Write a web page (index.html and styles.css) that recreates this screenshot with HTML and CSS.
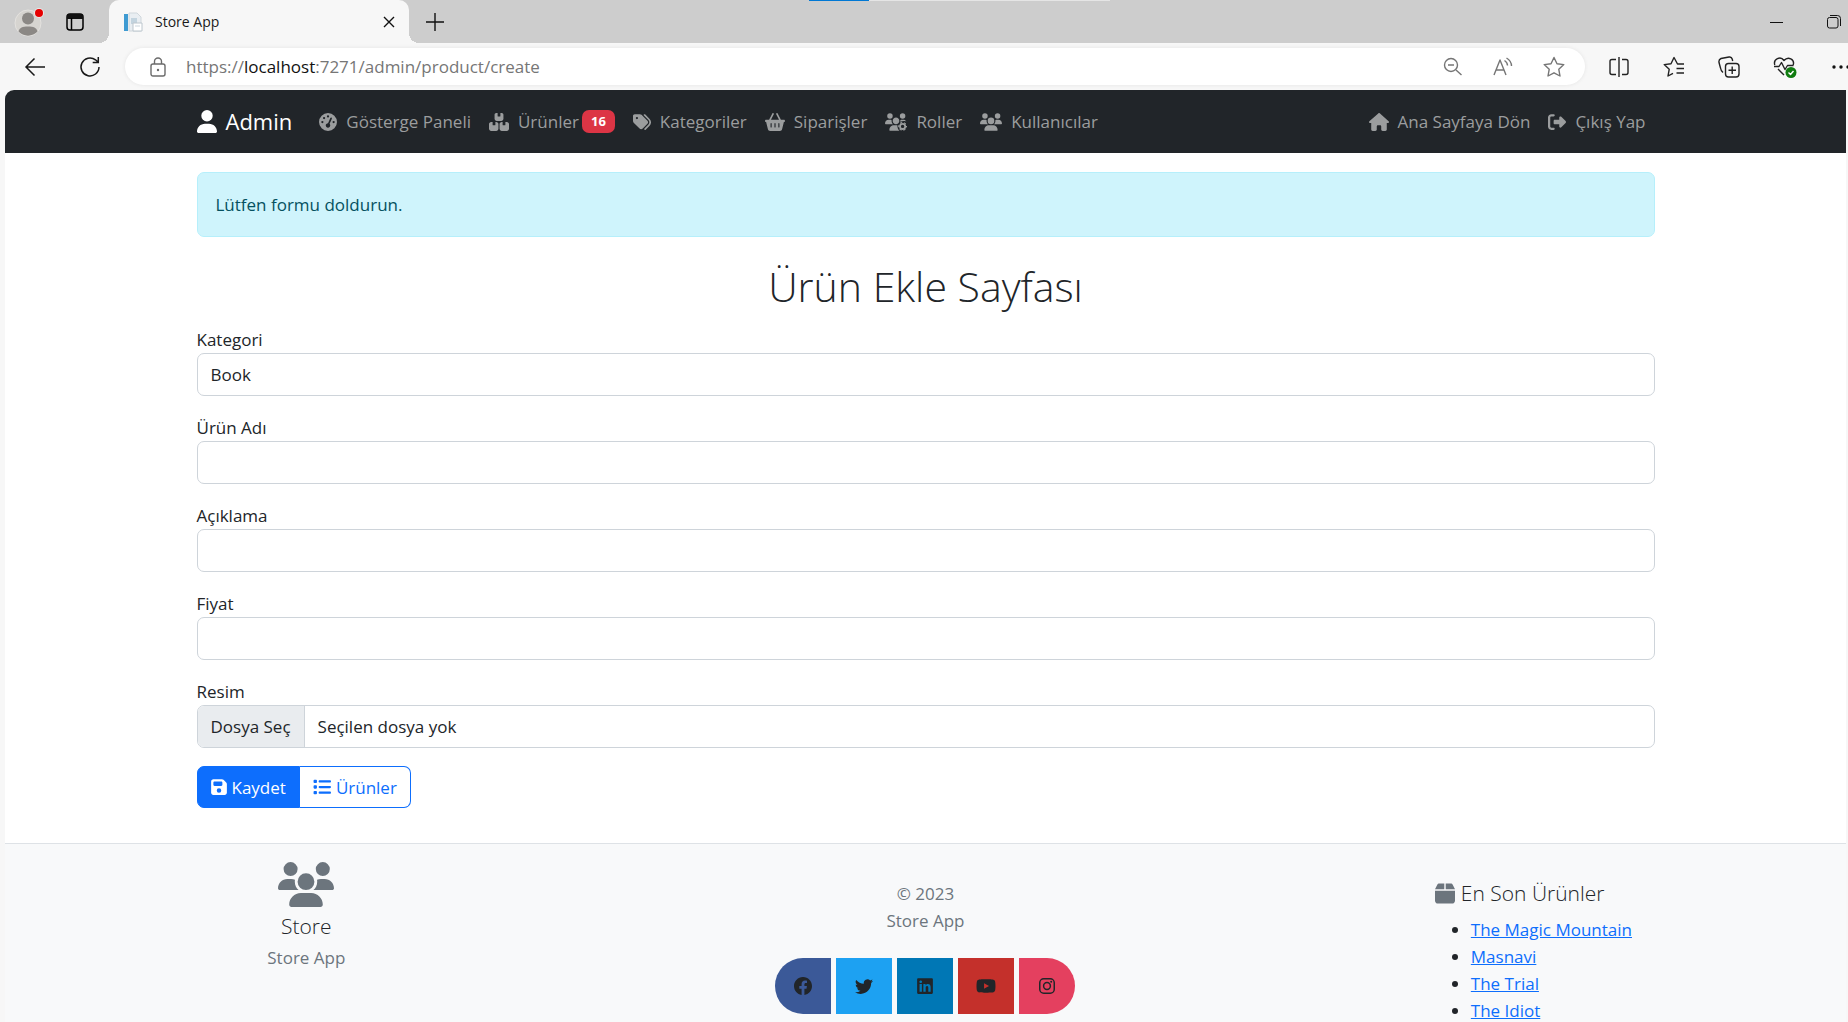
FILE: index.html
```html
<!DOCTYPE html>
<html lang="tr">
<head>
<meta charset="utf-8">
<meta name="viewport" content="width=device-width, initial-scale=1">
<title>Store App</title>
<link rel="stylesheet" href="styles.css">
</head>
<body>
<svg class="sprite" aria-hidden="true">
  <symbol id="users" viewBox="0 0 640 512"><path d="M144 0a80 80 0 1 1 0 160A80 80 0 1 1 144 0zM512 0a80 80 0 1 1 0 160A80 80 0 1 1 512 0zM0 298.7C0 239.8 47.8 192 106.7 192h42.7c15.9 0 31 3.5 44.6 9.7c-1.3 7.2-1.9 14.7-1.9 22.3c0 38.2 16.8 72.5 43.3 96c-.2 0-.4 0-.7 0H21.3C9.6 320 0 310.4 0 298.7zM405.3 320c-.2 0-.4 0-.7 0c26.6-23.5 43.3-57.8 43.3-96c0-7.6-.7-15-1.9-22.3c13.6-6.3 28.7-9.7 44.6-9.7h42.7C592.2 192 640 239.8 640 298.7c0 11.8-9.6 21.3-21.3 21.3H405.3zM224 224a96 96 0 1 1 192 0 96 96 0 1 1 -192 0zM128 485.3C128 411.7 187.7 352 261.3 352H378.7C452.3 352 512 411.7 512 485.3c0 14.7-11.9 26.7-26.7 26.7H154.7c-14.7 0-26.7-11.9-26.7-26.7z"/></symbol>
</svg>
<div class="browser">
  <header class="tabstrip">
    <button class="chrome-btn profile" aria-label="Profil">
      <svg width="32" height="32" viewBox="0 0 32 32"><circle cx="15" cy="17" r="13" fill="#d6d4d0" stroke="#e4e2df"/><circle cx="15" cy="12.500" r="6" fill="#8b8885"/><path d="M5.500 25.500c1-4 4-5 9.500-5s8.500 1 9.500 5a13 13 0 0 1-19 0z" fill="#8b8885"/><circle cx="26" cy="7" r="5" fill="#e8e8e8"/><circle cx="26" cy="7" r="4" fill="#e60000"/></svg>
    </button>
    <button class="chrome-btn workspaces" aria-label="Sekme eylemleri">
      <svg width="20" height="20" viewBox="0 0 20 20"><rect x="2" y="2" width="16" height="16" rx="3" fill="none" stroke="#000" stroke-width="1.500"/><path d="M2 7V4.500Q2 2 4.500 2h11Q18 2 18 4.500V7z"/><path d="M6.500 6v12" stroke="#000" stroke-width="1.500"/></svg>
    </button>
    <div class="tab">
      <svg width="20" height="20" viewBox="0 0 20 20"><path d="M1 2h4v17H1z" fill="#3f9bd2"/><path d="M6 1h8l4 4v14H6z" fill="#e9eef2" stroke="#d0d7dc"/><path d="M8 6h6v6H8z" fill="#c3d4df"/><path d="M10 11h9v8h-9z" fill="#fff" stroke="#bcc6cd"/><path d="M12 14h5" stroke="#ccd6dd"/></svg>
      <span class="tab-title">Store App</span>
      <button class="chrome-btn" aria-label="Sekmeyi kapat"><svg width="12" height="12" viewBox="0 0 12 12"><path d="M1 1l10 10M11 1L1 11" stroke="#111" stroke-width="1.400"/></svg></button>
    </div>
    <button class="chrome-btn new-tab" aria-label="Yeni sekme"><svg width="18" height="18" viewBox="0 0 18 18"><path d="M9 0v18M0 9h18" stroke="#111" stroke-width="1.400"/></svg></button>
    <div class="window-controls">
      <button class="chrome-btn" aria-label="Simge durumuna küçült"><svg width="14" height="14" viewBox="0 0 14 14"><path d="M0 7.500h13" stroke="#111"/></svg></button>
      <button class="chrome-btn" aria-label="Önceki boyut"><svg width="14" height="14" viewBox="0 0 14 14"><rect x=".5" y="2.500" width="10.500" height="10.500" rx="2" fill="none" stroke="#111"/><path d="M3 .5h7.500q3 0 3 3V11" fill="none" stroke="#111"/></svg></button>
    </div>
    <div class="load-line"></div>
  </header>

  <div class="toolbar">
    <button class="chrome-btn" aria-label="Geri"><svg width="22" height="20" viewBox="0 0 22 20"><path d="M21 10H2M10.500 1.500L2 10l8.500 8.500" fill="none" stroke="#1a1a1a" stroke-width="1.500"/></svg></button>
    <button class="chrome-btn reload" aria-label="Yenile"><svg width="22" height="22" viewBox="0 0 22 22"><path d="M20 11a9 9 0 1 1-3.500-7.200L19 6M19.300 1v5.600h-5.600" fill="none" stroke="#1a1a1a" stroke-width="1.500"/></svg></button>
    <div class="address">
      <svg width="16" height="20" viewBox="0 0 16 20"><rect x="1" y="7" width="14" height="12" rx="2" fill="none" stroke="#6b6b6b" stroke-width="1.400"/><path d="M4.500 7V4.500a3.500 3.500 0 0 1 7 0V7" fill="none" stroke="#6b6b6b" stroke-width="1.400"/><circle cx="8" cy="13" r="1.200" fill="#6b6b6b"/></svg>
      <span class="url">https://<b>localhost</b>:7271/admin/product/create</span>
      <div class="address-tools">
        <button class="chrome-btn" aria-label="Uzaklaştır"><svg class="line line-gray" width="20" height="20" viewBox="0 0 20 20"><circle cx="8" cy="8" r="6.500"/><path d="M5 8h6M13 13l5.500 5"/></svg></button>
        <button class="chrome-btn" aria-label="Sesli oku"><svg class="line line-gray" width="20" height="20" viewBox="0 0 20 20"><path d="M1 18L7 3l6 15M3 13h8M11.500 3.500q3 2 3 5M13.500 1q5 3 5 8"/></svg></button>
        <button class="chrome-btn" aria-label="Sık kullanılanlara ekle"><svg class="line line-gray" width="22" height="22" viewBox="0 0 22 22"><path d="M11 1.500l3 6.200 6.800.9-5 4.700 1.200 6.700-6-3.200L5 20l1.200-6.700-5-4.700L8 7.700z"/></svg></button>
      </div>
    </div>
    <div class="extensions">
      <button class="chrome-btn" aria-label="Ekranı böl"><svg class="line" width="22" height="22" viewBox="0 0 22 22"><path d="M8 3.500H4Q2 3.500 2 5.500v11q0 2 2 2h4M14 3.500h4q2 0 2 2v11q0 2-2 2h-4M11 1v20"/></svg></button>
      <button class="chrome-btn" aria-label="Sık kullanılanlar"><svg class="line" width="22" height="22" viewBox="0 0 22 22"><path d="M21 8h-6.500L11 1.500 8 7.700l-6.800.9 5 4.700L5 20l5-2.700M13.500 12.500H21M13.500 17H21"/></svg></button>
      <button class="chrome-btn" aria-label="Koleksiyonlar"><svg class="line" width="22" height="22" viewBox="0 0 22 22"><rect x="7.500" y="7.500" width="13.500" height="13.500" rx="3"/><path d="M14.200 10.500v7.500M10.500 14.200h7.500M5 16.500Q3 15 2.500 12L1 6.500q-.500-3 2-4L11 1q2.500-.5 3.200 2l.5 2"/></svg></button>
      <button class="chrome-btn" aria-label="Tarayıcı temel özellikleri"><svg class="line" width="24" height="22" viewBox="0 0 24 22"><path d="M1.800 9C0 3 7.500-.5 11 4.500 15 0 22 3 20.200 9M1 10.500h5l2.500-4 3.500 7 2.500-4h6M5 13l6 6"/><circle cx="18" cy="16.500" r="5.500" fill="#107c10" stroke="none"/><path d="M15.500 16.500l2 2 3-3.500" stroke="#fff"/></svg></button>
      <button class="chrome-btn" aria-label="Ayarlar ve daha fazlası"><svg width="22" height="22" viewBox="0 0 22 22"><circle cx="4" cy="11" r="1.700"/><circle cx="11" cy="11" r="1.700"/><circle cx="18" cy="11" r="1.700"/></svg></button>
    </div>
  </div>

  <div class="page">
    <nav class="navbar">
      <div class="container nav-inner">
        <a class="brand" href="#"><svg class="icon-brand" viewBox="0 0 448 512"><path d="M224 256A128 128 0 1 0 224 0a128 128 0 1 0 0 256zm-45.700 48C79.800 304 0 383.800 0 482.300C0 498.700 13.300 512 29.700 512H418.300c16.400 0 29.700-13.300 29.700-29.700C448 383.800 368.200 304 269.700 304H178.300z"/></svg>Admin</a>
        <ul class="nav-list">
          <li><a class="nav-link" href="#"><svg class="icon" viewBox="0 0 512 512"><path d="M0 256a256 256 0 1 1 512 0A256 256 0 1 1 0 256zM288 96a32 32 0 1 0 -64 0 32 32 0 1 0 64 0zM256 416c35.300 0 64-28.700 64-64c0-17.400-6.900-33.100-18.100-44.600L366 161.700c5.300-12.100-.2-26.300-12.300-31.600s-26.300 .2-31.600 12.300L257.900 288c-.6 0-1.300 0-1.900 0c-35.300 0-64 28.700-64 64s28.700 64 64 64zM176 144a32 32 0 1 0 -64 0 32 32 0 1 0 64 0zM96 288a32 32 0 1 0 0-64 32 32 0 1 0 0 64zm352-32a32 32 0 1 0 -64 0 32 32 0 1 0 64 0z"/></svg>Gösterge Paneli</a></li>
          <li><a class="nav-link" href="#"><svg class="icon icon-wide" viewBox="0 0 576 512"><path d="M248 0H208c-26.500 0-48 21.500-48 48V160c0 35.300 28.700 64 64 64H352c35.300 0 64-28.700 64-64V48c0-26.500-21.500-48-48-48H328V80c0 8.800-7.200 16-16 16H264c-8.800 0-16-7.200-16-16V0zM64 256c-35.300 0-64 28.700-64 64V448c0 35.300 28.700 64 64 64H208c35.300 0 64-28.700 64-64V320c0-35.300-28.700-64-64-64H184v80c0 8.800-7.200 16-16 16H120c-8.800 0-16-7.200-16-16V256H64zM368 512H512c35.300 0 64-28.700 64-64V320c0-35.300-28.700-64-64-64H472v80c0 8.800-7.200 16-16 16H408c-8.800 0-16-7.200-16-16V256H368c-35.300 0-64 28.700-64 64V448c0 35.300 28.700 64 64 64z"/></svg>Ürünler<span class="badge">16</span></a></li>
          <li><a class="nav-link" href="#"><svg class="icon" viewBox="0 0 512 512"><path d="M345 39.100L472.800 168.400c52.400 53 52.400 138.200 0 191.200L360.800 472.900c-9.300 9.400-24.500 9.500-33.900 .2s-9.500-24.500-.2-33.900L438.600 325.900c33.900-34.300 33.900-89.400 0-123.700L310.900 72.900c-9.300-9.400-9.200-24.600 .2-33.900s24.600-9.200 33.900 .2zM0 229.500V80C0 53.500 21.500 32 48 32H197.500c17 0 33.300 6.700 45.300 18.700l168 168c25 25 25 65.500 0 90.500L277.300 442.700c-25 25-65.500 25-90.500 0l-168-168C6.700 262.700 0 246.500 0 229.500zM144 144a32 32 0 1 0 -64 0 32 32 0 1 0 64 0z"/></svg>Kategoriler</a></li>
          <li><a class="nav-link" href="#"><svg class="icon icon-wide" viewBox="0 0 576 512"><path d="M253.300 35.100c6.100-11.800 1.500-26.300-10.200-32.400s-26.300-1.500-32.400 10.200L117.600 192H32c-17.700 0-32 14.300-32 32s14.300 32 32 32L83.900 463.500C91 492 116.600 512 146 512H430c29.400 0 55-20 62.100-48.500L544 256c17.700 0 32-14.300 32-32s-14.300-32-32-32H458.400L365.300 12.900C359.200 1.200 344.700-3.400 332.900 2.700s-16.300 20.600-10.200 32.400L404.300 192H171.700L253.300 35.100zM192 304v96c0 8.800-7.200 16-16 16s-16-7.200-16-16V304c0-8.800 7.200-16 16-16s16 7.200 16 16zm96-16c8.800 0 16 7.200 16 16v96c0 8.800-7.200 16-16 16s-16-7.200-16-16V304c0-8.800 7.200-16 16-16zm128 16v96c0 8.800-7.200 16-16 16s-16-7.200-16-16V304c0-8.800 7.200-16 16-16s16 7.200 16 16z"/></svg>Siparişler</a></li>
          <li><a class="nav-link" href="#"><svg class="icon icon-group" viewBox="0 0 640 512"><path d="M144 160A80 80 0 1 0 144 0a80 80 0 1 0 0 160zm368 0A80 80 0 1 0 512 0a80 80 0 1 0 0 160zM0 298.700C0 310.400 9.600 320 21.300 320H234.700c.2 0 .4 0 .7 0c-26.600-23.500-43.300-57.800-43.300-96c0-7.600 .7-15 1.900-22.300c-13.600-6.300-28.700-9.700-44.600-9.700H106.700C47.800 192 0 239.800 0 298.700zM320 320c53 0 96-43 96-96s-43-96-96-96s-96 43-96 96s43 96 96 96zm40 32H261.300C187.700 352 128 411.700 128 485.300c0 14.700 11.900 26.700 26.700 26.700H420c-40-35-60-90-60-160zM446 202c20-8 35-10 45-10h42.700C570 192 602 210 621 238c-60-20-120-15-174 12z"/><circle class="ring" cx="512" cy="384" r="76" stroke-width="52"/><circle class="ring" cx="512" cy="384" r="112" stroke-width="32" stroke-dasharray="62 55.286" stroke-dashoffset="31"/></svg>Roller</a></li>
          <li><a class="nav-link" href="#"><svg class="icon icon-group"><use href="#users"/></svg>Kullanıcılar</a></li>
        </ul>
        <ul class="nav-list nav-end">
          <li><a class="nav-link" href="#"><svg class="icon icon-wide" viewBox="0 0 576 512"><path d="M575.800 255.500c0 18-15 32.100-32 32.100h-32l.7 160.200c0 2.700-.2 5.400-.5 8.100V472c0 22.100-17.900 40-40 40H456c-1.100 0-2.200 0-3.300-.1c-1.400 .1-2.800 .1-4.200 .1H416 392c-22.100 0-40-17.900-40-40V448 384c0-17.700-14.300-32-32-32H256c-17.700 0-32 14.300-32 32v64 24c0 22.100-17.900 40-40 40H160 128.100c-1.500 0-3-.1-4.500-.2c-1.200 .1-2.400 .2-3.600 .2H104c-22.100 0-40-17.900-40-40V360c0-.9 0-1.900 .1-2.800V287.600H32c-18 0-32-14-32-32.100c0-9 3-17 10-24L266.400 8c7-7 15-8 22-8s15 2 21 7L564.800 231.500c8 7 12 15 11 24z"/></svg>Ana Sayfaya Dön</a></li>
          <li><a class="nav-link" href="#"><svg class="icon" viewBox="0 0 512 512"><path d="M377.900 105.900L500.700 228.700c7.200 7.200 11.300 17.100 11.300 27.300s-4.100 20.100-11.300 27.300L377.900 406.100c-6.400 6.400-15 9.900-24 9.900c-18.700 0-33.900-15.200-33.900-33.900l0-62.100-128 0c-17.700 0-32-14.300-32-32l0-64c0-17.700 14.300-32 32-32l128 0 0-62.100c0-18.700 15.200-33.900 33.900-33.900c9 0 17.600 3.600 24 9.900zM160 96L96 96c-17.700 0-32 14.300-32 32l0 256c0 17.700 14.300 32 32 32l64 0c17.700 0 32 14.300 32 32s-14.300 32-32 32l-64 0c-53 0-96-43-96-96L0 128C0 75 43 32 96 32l64 0c17.700 0 32 14.300 32 32s-14.300 32-32 32z"/></svg>Çıkış Yap</a></li>
        </ul>
      </div>
    </nav>

    <main class="container content">
      <div class="alert" role="alert">Lütfen formu doldurun.</div>
      <h1 class="title">Ürün Ekle Sayfası</h1>
      <form class="form">
        <div class="field"><label for="kategori">Kategori</label><select id="kategori" class="control"><option>Book</option></select></div>
        <div class="field"><label for="ad">Ürün Adı</label><input id="ad" class="control" type="text"></div>
        <div class="field"><label for="aciklama">Açıklama</label><input id="aciklama" class="control" type="text"></div>
        <div class="field"><label for="fiyat">Fiyat</label><input id="fiyat" class="control" type="text"></div>
        <div class="field">
          <label for="resim">Resim</label>
          <input id="resim" class="file-input" type="file">
          <label class="control file" for="resim"><span class="file-button">Dosya Seç</span><span class="file-name">Seçilen dosya yok</span></label>
        </div>
        <div class="btn-group">
          <button class="btn btn-primary" type="submit"><svg class="icon icon-narrow" viewBox="0 0 448 512"><path d="M64 32C28.700 32 0 60.700 0 96V416c0 35.300 28.700 64 64 64H384c35.300 0 64-28.700 64-64V173.300c0-17-6.700-33.300-18.700-45.300L352 50.700C340 38.700 323.700 32 306.700 32H64zm0 96c0-17.700 14.300-32 32-32H288c17.700 0 32 14.300 32 32v64c0 17.700-14.300 32-32 32H96c-17.700 0-32-14.300-32-32V128zM224 288a64 64 0 1 1 0 128 64 64 0 1 1 0-128z"/></svg>Kaydet</button>
          <a class="btn btn-outline" href="#"><svg class="icon" viewBox="0 0 512 512"><path d="M40 48C26.700 48 16 58.700 16 72v48c0 13.300 10.700 24 24 24H88c13.300 0 24-10.700 24-24V72c0-13.300-10.700-24-24-24H40zM192 64c-17.700 0-32 14.300-32 32s14.300 32 32 32H480c17.700 0 32-14.300 32-32s-14.300-32-32-32H192zm0 160c-17.700 0-32 14.300-32 32s14.300 32 32 32H480c17.700 0 32-14.300 32-32s-14.300-32-32-32H192zm0 160c-17.700 0-32 14.300-32 32s14.300 32 32 32H480c17.700 0 32-14.300 32-32s-14.300-32-32-32H192zM16 232v48c0 13.300 10.700 24 24 24H88c13.300 0 24-10.700 24-24V232c0-13.300-10.700-24-24-24H40c-13.300 0-24 10.700-24 24zM40 368c-13.300 0-24 10.700-24 24v48c0 13.300 10.700 24 24 24H88c13.300 0 24-10.700 24-24V392c0-13.300-10.700-24-24-24H40z"/></svg>Ürünler</a>
        </div>
      </form>
    </main>

    <footer class="footer">
      <div class="container footer-grid">
        <section class="about">
          <svg class="footer-logo"><use href="#users"/></svg>
          <h2 class="subhead">Store</h2>
          <p class="muted">Store App</p>
        </section>
        <section class="copyright">
          <p class="muted">© 2023<br>Store App</p>
          <div class="social">
            <a class="social-link facebook" href="#" aria-label="Facebook"><svg width="18" height="18" viewBox="0 0 16 16"><path d="M16 8.049c0-4.446-3.582-8.050-8-8.050C3.580 0-.002 3.603-.002 8.050c0 4.017 2.926 7.347 6.750 7.951v-5.625h-2.030V8.050H6.750V6.275c0-2.017 1.195-3.131 3.022-3.131.876 0 1.791.157 1.791.157v1.980h-1.009c-.993 0-1.303.621-1.303 1.258v1.510h2.218l-.354 2.326H9.250V16c3.824-.604 6.750-3.934 6.750-7.951z"/></svg></a>
            <a class="social-link twitter" href="#" aria-label="Twitter"><svg width="18" height="18" viewBox="0 0 16 16"><path d="M5.026 15c6.038 0 9.341-5.003 9.341-9.334 0-.14 0-.282-.006-.422A6.685 6.685 0 0 0 16 3.542a6.658 6.658 0 0 1-1.889.518 3.301 3.301 0 0 0 1.447-1.817 6.533 6.533 0 0 1-2.087.793A3.286 3.286 0 0 0 7.875 6.030a9.325 9.325 0 0 1-6.767-3.429 3.289 3.289 0 0 0 1.018 4.382A3.323 3.323 0 0 1 .64 6.575v.045a3.288 3.288 0 0 0 2.632 3.218 3.203 3.203 0 0 1-.865.115 3.230 3.230 0 0 1-.614-.057 3.283 3.283 0 0 0 3.067 2.277A6.588 6.588 0 0 1 .78 13.580a6.320 6.320 0 0 1-.78-.045A9.344 9.344 0 0 0 5.026 15z"/></svg></a>
            <a class="social-link linkedin" href="#" aria-label="LinkedIn"><svg width="16" height="18" viewBox="0 0 448 512"><path d="M416 32H31.900C14.300 32 0 46.500 0 64.300v383.400C0 465.500 14.300 480 31.900 480H416c17.600 0 32-14.500 32-32.300V64.300c0-17.800-14.400-32.300-32-32.300zM135.400 416H69V202.200h66.500V416zm-33.200-243c-21.300 0-38.500-17.300-38.500-38.500S80.900 96 102.200 96c21.200 0 38.500 17.300 38.500 38.500 0 21.300-17.200 38.500-38.500 38.500zm282.100 243h-66.400V312c0-24.800-.5-56.700-34.500-56.700-34.600 0-39.900 27-39.900 54.900V416h-66.400V202.200h63.700v29.200h.9c8.900-16.800 30.600-34.500 62.900-34.500 67.200 0 79.700 44.300 79.700 101.900V416z"/></svg></a>
            <a class="social-link youtube" href="#" aria-label="YouTube"><svg width="20" height="18" viewBox="0 0 576 512"><path d="M549.655 124.083c-6.281-23.650-24.787-42.276-48.284-48.597C458.781 64 288 64 288 64S117.220 64 74.629 75.486c-23.497 6.322-42.003 24.947-48.284 48.597-11.412 42.867-11.412 132.305-11.412 132.305s0 89.438 11.412 132.305c6.281 23.650 24.787 41.500 48.284 47.821C117.220 448 288 448 288 448s170.780 0 213.371-11.486c23.497-6.321 42.003-24.171 48.284-47.821 11.412-42.867 11.412-132.305 11.412-132.305s0-89.438-11.412-132.305zm-317.510 213.508V175.185l142.739 81.205-142.739 81.201z"/></svg></a>
            <a class="social-link instagram" href="#" aria-label="Instagram"><svg width="16" height="16" viewBox="0 0 16 16"><rect class="ring" x=".75" y=".75" width="14.500" height="14.500" rx="4" stroke-width="1.500"/><circle class="ring" cx="8" cy="8" r="3.400" stroke-width="1.500"/><circle cx="12.200" cy="3.800" r="1"/></svg></a>
          </div>
        </section>
        <section class="latest">
          <h2 class="subhead"><svg class="box-icon" viewBox="0 0 448 512"><path d="M50.700 58.500L0 160H208V32H93.700C75.500 32 58.900 42.300 50.700 58.500zM240 160H448L397.300 58.500C389.100 42.300 372.500 32 354.300 32H240V160zm208 32H0V416c0 35.300 28.700 64 64 64H384c35.300 0 64-28.700 64-64V192z"/></svg>En Son Ürünler</h2>
          <ul class="latest-list">
            <li><a href="#">The Magic Mountain</a></li>
            <li><a href="#">Masnavi</a></li>
            <li><a href="#">The Trial</a></li>
            <li><a href="#">The Idiot</a></li>
          </ul>
        </section>
      </div>
    </footer>
  </div>
</div>
</body>
</html>
```
FILE: styles.css
```css
*, *::before, *::after { box-sizing: border-box; }

body {
  margin: 0;
  background: #f7f7f7;
  color: #212529;
  font-family: "Open Sans", "Noto Sans", sans-serif;
  font-size: 17px;
  line-height: 27px;
}

h1, h2, p, ul { margin: 0; padding: 0; }
svg { display: block; flex: none; fill: currentColor; }
.sprite { display: none; }
.line { fill: none; stroke: #222; stroke-width: 1.4; stroke-linejoin: round; }
.line-gray { stroke: #757575; }
.ring { fill: none; stroke: currentColor; }

/* Browser frame */
.browser {
  display: flex;
  flex-direction: column;
  height: 100vh;
  overflow: hidden;
}

.chrome-btn {
  display: flex;
  padding: 0;
  border: 0;
  background: none;
  color: #111;
}

.tabstrip {
  position: relative;
  display: flex;
  flex: none;
  align-items: center;
  height: 43px;
  padding-left: 13px;
  background: #cdcdcd;
}

.workspaces { margin-left: 20px; }

.tab {
  position: relative;
  display: flex;
  align-items: center;
  align-self: stretch;
  width: 300px;
  margin-left: 24px;
  padding: 0 14px;
  border-radius: 10px 10px 0 0;
  background: #f7f7f7;
  color: #1a1a1a;
  font-size: 14px;
}

.tab::before, .tab::after {
  content: "";
  position: absolute;
  bottom: 0;
  width: 10px;
  height: 10px;
}
.tab::before { right: 100%; background: radial-gradient(circle at 0 0, #cdcdcd 10px, #f7f7f7 10px); }
.tab::after { left: 100%; background: radial-gradient(circle at 100% 0, #cdcdcd 10px, #f7f7f7 10px); }

.tab-title { flex: 1; padding-left: 12px; }
.new-tab { margin-left: 17px; }

.window-controls {
  display: flex;
  gap: 43px;
  margin-left: auto;
  padding-right: 7px;
}

.load-line {
  position: absolute;
  top: 0;
  left: 809px;
  width: 301px;
  height: 1px;
  background: linear-gradient(90deg, #0078d4 20%, #e5e5e5 20%);
}

.toolbar {
  display: flex;
  flex: none;
  align-items: center;
  height: 47px;
  padding-left: 24px;
}

.reload { margin-left: 33px; }

.address {
  display: flex;
  flex: 1;
  align-items: center;
  height: 37px;
  margin-left: 24px;
  padding: 0 20px 0 25px;
  border-radius: 19px;
  background: #fff;
  box-shadow: 0 0 4px #00000014;
}

.url { margin-left: 20px; color: #767676; }
.url b { color: #111; font-weight: 400; }
.address-tools { display: flex; gap: 30px; margin-left: auto; align-items: center; }
.extensions { display: flex; gap: 33px; margin-left: 23px; margin-right: -4px; }

/* Page */
.page {
  flex: 1;
  margin: 0 2px 0 5px;
  overflow: hidden;
  border-radius: 9px 0 0 0;
  background: #fff;
}

.container {
  width: 100%;
  max-width: 1486px;
  margin: 0 auto;
  padding: 0 14px;
}

.navbar {
  padding: 9px 0;
  background: #212529;
  color: #9b9d9e;
}

.nav-inner { display: flex; align-items: center; height: 45px; }

.brand {
  display: flex;
  align-items: center;
  gap: 9px;
  margin-right: 18px;
  color: #fff;
  font-size: 22px;
  text-decoration: none;
}

.icon-brand { width: 20px; height: 23px; }

.nav-list { display: flex; list-style: none; }
.nav-end { margin-left: auto; }

.nav-link {
  display: flex;
  align-items: center;
  padding: 9px;
  color: inherit;
  text-decoration: none;
}

.nav-link .icon { margin-right: 9px; }

.icon { width: 18px; height: 18px; }
.icon-narrow { width: 16px; }
.icon-wide { width: 20px; }
.icon-group { width: 22px; }

.badge {
  margin-left: 3px;
  padding: 0 9px;
  border-radius: 7px;
  background: #dc3545;
  color: #fff;
  font-size: 13px;
  font-weight: 700;
  line-height: 23px;
}

.content { padding-top: 19px; padding-bottom: 35px; }

.alert {
  padding: 18px;
  border: 1px solid #b6effb;
  border-radius: 7px;
  background: #cff4fc;
  color: #055160;
}

.title {
  margin: 18px 0 9px;
  font-size: 41px;
  font-weight: 300;
  line-height: 62px;
  text-align: center;
}

.form { display: flex; flex-direction: column; gap: 18px; }
.field { display: flex; flex-direction: column; }

.control {
  display: block;
  width: 100%;
  height: 43px;
  padding: 0 13px;
  border: 1px solid #ced4da;
  border-radius: 7px;
  background: #fff;
  color: #212529;
  font: inherit;
  appearance: none;
}

.file-input {
  position: absolute;
  width: 1px;
  height: 1px;
  opacity: 0;
}

.file { display: flex; align-items: stretch; padding: 0; overflow: hidden; line-height: 41px; }
.file-button { padding: 0 13px; border-right: 1px solid #ced4da; background: #e9ecef; }
.file-name { padding: 0 13px; }

.btn-group { display: flex; }

.btn {
  display: flex;
  align-items: center;
  gap: 5px;
  height: 42px;
  padding: 0 13px;
  border: 1px solid #0d6efd;
  font: inherit;
  text-decoration: none;
}

.btn-primary { border-radius: 7px 0 0 7px; background: #0d6efd; color: #fff; }
.btn-outline { border-left: 0; border-radius: 0 7px 7px 0; color: #0d6efd; }

/* Footer */
.footer { border-top: 1px solid #dee2e6; background: #f8f9fa; }

.footer-grid {
  display: grid;
  grid-template-columns: 1fr 4fr 1fr;
  padding: 0;
}

.about { padding-top: 18px; text-align: center; }
.footer-logo { width: 56px; height: 45px; margin: 0 auto 6px; color: #6c757d; }
.subhead { font-size: 21px; font-weight: 300; line-height: 27px; }
.about .subhead { margin-bottom: 4px; }
.muted { color: #6c757d; }

.copyright { padding-top: 36px; text-align: center; }
.social { display: flex; justify-content: center; gap: 5px; margin-top: 24px; }

.social-link {
  display: flex;
  align-items: center;
  justify-content: center;
  width: 56px;
  height: 56px;
  color: #212529;
}

.facebook { border-radius: 28px 0 0 28px; background: #3b5998; }
.twitter { background: #1da1f2; }
.linkedin { background: #0077b5; }
.youtube { background: #c4302b; }
.instagram { border-radius: 0 28px 28px 0; background: #e4405f; }

.latest { padding: 36px 0 0 14px; }
.latest .subhead { display: flex; align-items: center; gap: 6px; margin-bottom: 9px; white-space: nowrap; }
.box-icon { width: 20px; height: 23px; color: #6c757d; }
.latest-list { padding-left: 36px; }
.latest-list a { color: #0d6efd; }
```
